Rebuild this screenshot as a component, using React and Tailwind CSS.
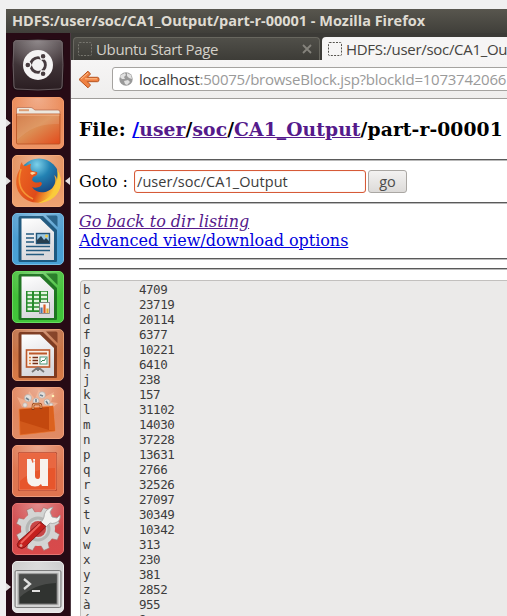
import React from "react";

const rows = [
  ["b", "4709"], ["c", "23719"], ["d", "20114"], ["f", "6377"], ["g", "10221"],
  ["h", "6410"], ["j", "238"], ["k", "157"], ["l", "31102"], ["m", "14030"],
  ["n", "37228"], ["p", "13631"], ["q", "2766"], ["r", "32526"], ["s", "27097"],
  ["t", "30349"], ["v", "10342"], ["w", "313"], ["x", "230"], ["y", "381"],
  ["z", "2852"], ["à", "955"], ["é", "8"],
];

function Tile({ id, from, to, edge, children }) {
  return (
    <svg viewBox="0 0 52 52" className="block h-[52px] w-[52px]">
      <defs>
        <linearGradient id={id} x1="0" y1="0" x2="0" y2="1">
          <stop offset="0" stopColor={from} />
          <stop offset="1" stopColor={to} />
        </linearGradient>
        <radialGradient id={id + "s"} cx=".5" cy="0" r=".65">
          <stop offset="0" stopColor="#fff" stopOpacity=".35" />
          <stop offset="1" stopColor="#fff" stopOpacity="0" />
        </radialGradient>
      </defs>
      <rect x=".5" y=".5" width="51" height="51" rx="4.5" fill={`url(#${id})`} stroke={edge} />
      <rect x="1" y="1" width="50" height="50" rx="4" fill={`url(#${id}s)`} />
      {children}
    </svg>
  );
}

function Dash() {
  return (
    <Tile id="dash" from="#554b4e" to="#2a1d21" edge="#1f0b12">
      <path d="M4 2Q26 0 48 2Q50 2 50 4Q52 26 50 47Q50 50 47 50Q26 52 5 50Q2 50 2 47Q0 26 2 4Q2 2 4 2Z" fill="none" stroke="#75696d" strokeWidth=".8" />
      <circle cx="26" cy="26" r="15" fill="#f4f3f3" />
      <circle cx="26" cy="26" r="7.3" fill="none" stroke="#473c3f" strokeWidth="3" />
      <g stroke="#f4f3f3" strokeWidth="1.2">
        <path d="M26 26H12M26 26L33 13.9M26 26L33 38.1" />
        <circle cx="15.8" cy="26" r="2.9" fill="#473c3f" />
        <circle cx="31.1" cy="17.2" r="2.9" fill="#473c3f" />
        <circle cx="31.1" cy="34.8" r="2.9" fill="#473c3f" />
      </g>
      <circle cx="26" cy="26" r="5.7" fill="#f4f3f3" />
    </Tile>
  );
}

function Files() {
  return (
    <Tile id="files" from="#e9824d" to="#ed9465" edge="#f39a6c">
      <defs>
        <linearGradient id="folder" x1="0" y1="0" x2="1" y2="1">
          <stop offset="0" stopColor="#cf713b" />
          <stop offset=".45" stopColor="#dc8e54" />
          <stop offset="1" stopColor="#e34b1c" />
        </linearGradient>
      </defs>
      <path d="M4.5 17V12Q4.5 10.5 6 10.5H19Q20 10.5 21 11.5L23 13H46Q48 13 48 15V18H4.5Z" fill="#ece8df" stroke="#b6674a" strokeWidth=".7" />
      <path d="M7 13.2H17" stroke="#dd9e76" strokeWidth="2" />
      <path d="M4.5 17H48V46Q48 47 47 47H6Q4.5 47 4.5 46Z" fill="url(#folder)" stroke="#b85224" strokeWidth=".8" />
      <path d="M5 18H47.5" stroke="#f5b083" />
      <path d="M5 18H47V27C25 27 18 32 5 43Z" fill="#fff" opacity=".1" />
    </Tile>
  );
}

function Firefox() {
  return (
    <Tile id="fox" from="#e28a55" to="#efa272" edge="#f4aa7b">
      <defs>
        <radialGradient id="globe" cx=".45" cy=".15" r=".8">
          <stop offset="0" stopColor="#7dd1ea" />
          <stop offset=".4" stopColor="#2382b3" />
          <stop offset="1" stopColor="#153875" />
        </radialGradient>
        <linearGradient id="fur" x1="0" y1="0" x2="1" y2=".4">
          <stop offset="0" stopColor="#ed6b24" />
          <stop offset=".65" stopColor="#df4b1a" />
          <stop offset="1" stopColor="#ffd53b" />
        </linearGradient>
      </defs>
      <circle cx="27" cy="24" r="20.5" fill="url(#globe)" />
      <path d="M45 14C51 23 50 35 42 42C32 51 15 49 8 39C2 31 4 20 8 14C8 12 8 9 10 7C10 10 12 11 14 11C16 10 17 9 19 9C18 12 18 14 20 16L25 17C26 19 24 21 21 22L20 25C22 28 25 28 28 27C31 27 30 31 27 32C24 33 22 33 20 32C25 40 37 38 41 32C44 28 44 24 42 20C44 21 45 23 45 26C46 21 46 18 45 14Z" fill="url(#fur)" />
      <path d="M45 14C51 24 49 35 42 42C37 46 31 48 26 48C37 44 43 38 44 30C46 23 46 18 45 14Z" fill="#f9cb3c" />
      <path d="M9 14C5 27 8 38 21 44" fill="none" stroke="#f49535" strokeWidth="1.6" />
      <path d="M18 18Q20 16 24 18L20 20Z" fill="#ffd8a0" />
    </Tile>
  );
}

function Sheet({ id, from, to, edge, dark, children }) {
  return (
    <Tile id={id} from={from} to={to} edge={edge}>
      <defs>
        <linearGradient id={id + "p"} x1="0" y1="0" x2=".3" y2="1">
          <stop offset="0" stopColor="#fff" />
          <stop offset="1" stopColor="#d8d8dc" />
        </linearGradient>
      </defs>
      <path d="M8.5 3H31L45 17V48Q45 49 44 49H8Q6.5 49 6.500 47.500V5Q6.500 3 8.500 3Z" fill={dark} opacity=".85" />
      <path d="M9.500 5.500H28L42 19V47H9.500Z" fill={`url(#${id}p)`} />
      <path d="M34 2.500H44Q45.500 2.500 45.500 4V14Z" fill={dark} opacity=".75" />
      {children}
    </Tile>
  );
}

function Writer() {
  return (
    <Sheet id="writer" from="#4f9bcf" to="#48a1d6" edge="#77bbe3" dark="#164c71">
      <path d="M14 21H22M14 25H22M14 29H22M14 33.500H38M14 37.500H38M14 41.500H32" stroke="#245b80" strokeWidth="1.7" />
      <rect x="24.500" y="20.500" width="13" height="10" fill="#9bc8e4" stroke="#235477" strokeWidth="1.400" />
      <path d="M25 30V27L29 23L32 27L34 25L37 28V30Z" fill="#263e4e" />
      <circle cx="34.500" cy="23" r="1.500" fill="#f0cb44" />
    </Sheet>
  );
}

function Calc() {
  return (
    <Sheet id="calc" from="#43bd37" to="#41c53a" edge="#69dc61" dark="#18671c">
      <rect x="14" y="20" width="22" height="21" fill="#268b2b" />
      <path d="M15.500 22H20M22 22H27M29 22H35M15.500 26H20M22 26H27M29 26H35M15.500 30H20M22 30H27M29 30H35M15.500 34H20M22 34H27M15.500 38H20M22 38H27" stroke="#e3f5df" strokeWidth="2.400" />
      <rect x="27.500" y="31.500" width="10" height="11" fill="#f4f4f2" stroke="#777" strokeWidth=".8" />
      <path d="M29.500 42V36.500" stroke="#4976ac" strokeWidth="2.200" />
      <path d="M32.500 42V33.500" stroke="#db5b25" strokeWidth="2.200" />
      <path d="M35.500 42V37.500" stroke="#dfac32" strokeWidth="2.200" />
    </Sheet>
  );
}

function Impress() {
  return (
    <Sheet id="impress" from="#bd693f" to="#d97b47" edge="#e19b71" dark="#713018">
      <rect x="14.500" y="21" width="23" height="17" fill="#f8eee6" stroke="#bd582b" strokeWidth="1.600" />
      <path d="M17 24.500H35" stroke="#bd582b" strokeWidth="2" />
      <path d="M17 28.500H19M17 31.500H19M17 34.500H19" stroke="#dc833d" strokeWidth="1.500" />
      <path d="M20.500 28.500H26M20.500 31.500H26M20.500 34.500H26" stroke="#753018" strokeWidth="1.700" />
      <rect x="28" y="28" width="7" height="7" fill="#fff" stroke="#489478" />
      <path d="M29 33L31 31L32 32L34 29" fill="none" stroke="#348353" />
      <path d="M25 39L20 43M27 39L32 43M26 38V42" stroke="#777" strokeWidth="1.800" />
    </Sheet>
  );
}

function Software() {
  return (
    <Tile id="soft" from="#df8058" to="#e08b65" edge="#eea17d">
      <path d="M10 20L5 10L15 14L17 4L23 12L27 2L31 11L42 5L39 15L46 16L38 23Z" fill="#fbc7a7" opacity=".5" />
      <g fill="#e4e0dc" stroke="#b9ada8" strokeWidth=".7">
        <circle cx="16" cy="11" r="3.5" /><circle cx="30" cy="8" r="3.300" /><circle cx="24" cy="14" r="3" /><circle cx="35" cy="15" r="3" /><circle cx="13" cy="18" r="2.200" /><circle cx="39" cy="18" r="2" />
      </g>
      <path d="M14 11L17 13M28 8L31 9M24 12V15M34 14L36 17" stroke="#6f8390" strokeWidth="1.600" />
      <circle cx="41" cy="9" r="1.300" fill="#fff1b3" />
      <path d="M7 22L41 19L43 44L8 48Z" fill="#c3480e" stroke="#ed7c38" strokeWidth=".8" />
      <path d="M37 19.500L41 19L43 44L37 43Z" fill="#dc621f" />
      <path d="M8 34L37 43L42 44L8 48Z" fill="#df6825" opacity=".5" />
      <path d="M21 23V19Q21 17 23 17H27Q29 17 29 19V22" fill="none" stroke="#8d3714" strokeWidth="2.500" />
      <path d="M21 22V19Q21 17 23 17H27Q29 17 29 19V21" fill="none" stroke="#f6b173" strokeWidth="1.200" />
    </Tile>
  );
}

function UbuntuOne() {
  return (
    <Tile id="uone" from="#de7851" to="#df7450" edge="#ee9b7c">
      <rect x="6" y="7" width="39" height="39" rx="1.500" fill="#ad4028" />
      <rect x="7" y="8" width="37" height="37" rx="1" fill="#e7562c" stroke="#f18b69" strokeWidth=".8" />
      <path d="M8 9H43V23Q22 23 8 36Z" fill="#fff" opacity=".1" />
      <path d="M15 14H19L20.500 18L23 16V31Q23 34 26 34Q28 34 28 31V14H36V41H30L29 39Q27 41.500 23 41.500Q15 41.500 15 33Z" fill="#f7f2ee" />
      <path d="M21 14H23V16L21.500 17Z" fill="#f7f2ee" />
    </Tile>
  );
}

function Settings() {
  return (
    <Tile id="settings" from="#cf4b4d" to="#d94a4b" edge="#e67471">
      <g fill="#d4d5d4" stroke="#aa6965" strokeWidth=".6">
        {[0, 45, 90, 135, 180, 225, 270, 315].map((a) => (
          <path key={a} d="M21.500 13L23 4H29L30.500 13Z" transform={`rotate(${a + 22} 26 26)`} />
        ))}
      </g>
      <circle cx="26" cy="26" r="17" fill="#d3d4d3" />
      <circle cx="26" cy="26" r="11" fill="none" stroke="#b4b6b4" strokeWidth="3" />
      <circle cx="26" cy="26" r="8" fill="#c84646" />
      <path d="M29 19Q31 17 32 14Q32 8 38 5L41 4L38 9L40 14L45 15L48 12Q49 18 43 20Q40 21 38 20L33 25Z" fill="#f1f1ef" stroke="#a0a0a0" strokeWidth=".8" />
      <path d="M28.500 19L34 23.500L13 44Q10 47 6 44Q4 42 7 38Z" fill="#c4201d" stroke="#7e1616" strokeWidth=".9" />
      <path d="M28 21L9 40" stroke="#ef625b" strokeWidth="2" />
      <circle cx="9" cy="42.500" r="1.500" fill="#e1968a" />
    </Tile>
  );
}

function Terminal() {
  return (
    <Tile id="term" from="#c8c8c8" to="#e5e5e5" edge="#ececec">
      <rect x="3" y="9.500" width="46" height="37" rx="1.500" fill="#c4c5c3" stroke="#737373" strokeWidth=".9" />
      <rect x="4.500" y="11" width="43" height="34" fill="none" stroke="#eee" strokeWidth=".7" />
      <rect x="7" y="13" width="38" height="30" fill="#303330" stroke="#777" />
      <path d="M8 14H44V22C28 23 19 27 8 36Z" fill="#fff" opacity=".12" />
      <path d="M12 18L18 23L12 28" fill="none" stroke="#e0e0df" strokeWidth="2.300" />
      <path d="M20 30H28" stroke="#e0e0df" strokeWidth="2" />
    </Tile>
  );
}

const launcher = [
  [Dash], [Files, true], [Firefox, true, true], [Writer], [Calc],
  [Impress], [Software], [UbuntuOne], [Settings], [Terminal, true],
];

function Launcher() {
  return (
    <nav className="flex w-[65px] shrink-0 flex-col gap-[6px] border-r border-[#4c3942] bg-[#270b15] pt-[6px]">
      {launcher.map(([Icon, left, right], i) => (
        <div key={i} className="relative h-[52px] pl-[6px]">
          <Icon />
          {left && <svg viewBox="0 0 5 8" className="absolute top-[22px] left-0 h-2 w-[5px]"><path d="M0 0L5 4L0 8Z" fill="#e4e0e1" /></svg>}
          {right && <svg viewBox="0 0 5 8" className="absolute top-[22px] right-0 h-2 w-[5px]"><path d="M5 0L0 4L5 8Z" fill="#e4e0e1" /></svg>}
        </div>
      ))}
    </nav>
  );
}

function Placeholder({ color }) {
  return (
    <svg viewBox="0 0 14 14" className="h-[14px] w-[14px] shrink-0">
      <rect x=".5" y=".5" width="13" height="13" rx="1" fill="none" stroke={color} strokeDasharray="2 1.250" />
    </svg>
  );
}

function Rule({ className }) {
  return <div className={`h-[2px] shrink-0 border-t border-t-[#5a5a5a] bg-[#b9b9b9] ${className}`} />;
}

export default function App() {
  return (
    <div className="flex h-[616px] w-[507px] flex-col overflow-hidden bg-[#f0f0f0] pt-[9px] pl-[6px] font-['Open_Sans','Noto_Sans',sans-serif] whitespace-nowrap">
      <header className="h-6 shrink-0 bg-linear-to-b from-[#58564e] to-[#403f3a] pl-[6px] text-[14.5px] leading-[24px] font-bold text-[#dfdbd2]">
        <span className="tracking-[-0.01px]">HDFS:/user/soc/CA1_Output/part-r-00001 - Mozilla Firefox</span>
      </header>
      <div className="flex min-h-0 flex-1">
        <Launcher />
        <main className="flex min-w-0 flex-1 flex-col overflow-hidden bg-white">
          <div className="flex h-[27px] shrink-0 bg-[#3c3b37] pt-[4px]">
            <div className="ml-[2px] flex w-[247px] shrink-0 items-center rounded-t-[4px] border border-b-0 border-[#68675f] bg-linear-to-b from-[#504f49] to-[#3d3c37] pl-[4px] text-[#d4d0c8]">
              <Placeholder color="#77766f" />
              <span className="ml-[4px] text-[15px] leading-5 tracking-[-0.36px]">Ubuntu Start Page</span>
              <svg viewBox="0 0 10 10" className="mr-[7px] ml-auto h-[10px] w-[10px]"><path d="M1 1L9 9M9 1L1 9" stroke="#85837c" strokeWidth="1.800" /></svg>
            </div>
            <div className="ml-[2px] flex w-[185px] shrink-0 items-center rounded-tl-[4px] bg-[#f6f5f5] pl-[6px] text-[#46443f]">
              <Placeholder color="#55534e" />
              <span className="ml-[4px] text-[15px] leading-5 tracking-[-0.3px]">HDFS:/user/soc/CA1_Ou</span>
            </div>
          </div>
          <div className="flex h-[39px] shrink-0 items-center border-b border-[#a09e9b] bg-linear-to-b from-[#f6f5f5] to-[#efeeed] pl-[7px]">
            <svg viewBox="0 0 22 19" className="h-[19px] w-[22px] shrink-0"><path d="M10 1.200L1 9.500L10 17.800L12.500 15L9.300 11.700H19.500Q21 11.700 21 9.500T19.500 7.300H9.300L12.500 4Z" fill="#ef8142" stroke="#b75420" /><path d="M3 9L10 3M7 8.800H19" stroke="#ffc08c" /></svg>
            <div className="ml-[12px] flex h-[24px] w-[420px] shrink-0 items-center rounded-[3px] border border-[#a5a3a0] bg-white pl-[6px]">
              <svg viewBox="0 0 14 14" className="h-[14px] w-[14px] shrink-0"><circle cx="7" cy="7" r="6.700" fill="#999" /><path d="M2 3L6 1L7 3L5 5L6 7L3 7L1 5ZM8 1L12 3L13 7L10 6L8 4ZM5 9L9 8L11 10L8 13L6 12Z" fill="#e1e1e1" /></svg>
              <span className="ml-[6px] text-[15px] leading-5 tracking-[-0.25px] text-[#9a9a9a]"><span className="text-[#3c3c3c]">localhost</span>:50075/browseBlock.jsp?blockId=1073742066</span>
            </div>
          </div>
          <div className="flex min-h-0 flex-1 flex-col pl-[8px] font-['DejaVu_Serif',serif] text-black">
            <h3 className="mt-[18px] h-[24px] text-[18.7px] leading-[24px] font-bold tracking-[0.1px]">
              File: <span className="text-[#0000ee] underline">/</span><span className="text-[#551a8b] underline">user</span>/<span className="text-[#551a8b] underline">soc</span>/<span className="text-[#551a8b] underline">CA1_Output</span>/part-r-00001
            </h3>
            <Rule className="mt-[18px]" />
            <div className="mt-[9px] flex h-[23px] items-center text-[16px]">
              <span className="w-[55px]">Goto :</span>
              <div className="flex h-[23px] w-[232px] items-center rounded-[3px] border border-[#d65a38] pl-[2px] font-['Open_Sans','Noto_Sans',sans-serif] text-[14.5px] text-[#3c3c3c] shadow-[inset_0_0_1px_#ef9e85]">
                <span className="tracking-[0.06px]">/user/soc/CA1_Output</span>
              </div>
              <button className="ml-[2px] flex h-[23px] w-[39px] items-center justify-center rounded-[3px] border border-[#aaa7a3] bg-linear-to-b from-[#f3f2f1] to-[#dddbd9] font-['Open_Sans','Noto_Sans',sans-serif] text-[14.5px] text-[#4c4c4c]"><span>go</span></button>
            </div>
            <Rule className="mt-[9px]" />
            <div className="mt-[8px] flex h-[38px] flex-col items-start text-[16px] leading-[19px] tracking-[-0.03px]">
              <span className="text-[#551a8b] italic underline">Go back to dir listing</span>
              <span className="text-[#0000dd] underline">Advanced view/download options</span>
            </div>
            <Rule className="mt-[8px]" />
            <Rule className="mt-[8px]" />
            <div className="mt-[10px] ml-[1px] min-h-0 flex-1 overflow-hidden rounded-tl-[4px] border-t border-l border-[#c2c0be] bg-[#ebeae9] pt-[1px] pl-[2px] font-['DejaVu_Sans_Mono',monospace] text-[12.5px] leading-[15px] tracking-[-0.48px] text-[#3c3c3c]">
              {rows.map(([k, v]) => (
                <div key={k} className="flex h-[15px]"><span className="w-[56px]">{k}</span><span>{v}</span></div>
              ))}
            </div>
          </div>
        </main>
      </div>
    </div>
  );
}
